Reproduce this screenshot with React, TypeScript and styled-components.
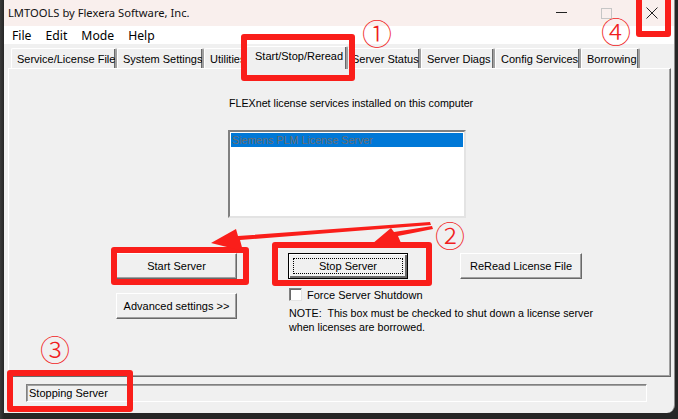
import React from "react";
import styled, { createGlobalStyle, css } from "styled-components";

const GlobalStyle = createGlobalStyle`
	html, body {
		margin: 0;
		padding: 0;
		background: #2b2b2b;
		width: 678px;
		height: 419px;
		overflow: hidden;
	}
`;

const Page = styled.div`
	width: 678px;
	height: 419px;
	padding-left: 4px;
	box-sizing: border-box;
	background: linear-gradient(90deg, #3a3a3a 0, #262626 4px);
`;

const Window = styled.div`
	position: relative;
	width: 671px;
	height: 413px;
	background: #f0f0f0;
	border-right: 1px solid #8c8c8c;
	border-bottom-right-radius: 8px;
	box-sizing: border-box;
	display: flex;
	flex-direction: column;
	font-family: "Liberation Sans", Arial, sans-serif;
	font-size: 10.7px;
	color: #000;
`;

const TitleBar = styled.div`
	height: 26px;
	background: #f9efed;
	display: flex;
	align-items: center;
	padding-left: 4px;
	font-family: "Noto Sans", sans-serif;
	font-size: 11.2px;
	color: #111;
`;

const TitleText = styled.span`
	flex: 1;
	padding-bottom: 1px;
`;

const CaptionButton = styled.div`
	width: 45px;
	height: 26px;
	display: flex;
	align-items: center;
	justify-content: center;
`;

const MenuBar = styled.div`
	height: 18px;
	background: #fff;
	display: flex;
	align-items: center;
	padding-left: 1px;
	font-family: "Noto Sans", sans-serif;
	font-size: 12.2px;
`;

const MenuItem = styled.span`
	padding: 0 7px;
`;

const Client = styled.div`
	flex: 1;
	display: flex;
	flex-direction: column;
`;

const TabStrip = styled.div`
	height: 24px;
	display: flex;
	align-items: flex-end;
	padding-left: 7px;
	position: relative;
	z-index: 1;
`;

const Tab = styled.div<{ $w: number; $active?: boolean }>`
	width: ${(p) => p.$w}px;
	height: 20px;
	box-sizing: border-box;
	border-top: 1px solid #fff;
	border-left: 1px solid #fff;
	border-right: 2px solid #a0a0a0;
	box-shadow: inset -1px 0 0 #696969;
	border-top-left-radius: 2px;
	border-top-right-radius: 2px;
	display: flex;
	align-items: center;
	padding-left: 5px;
	white-space: nowrap;
	overflow: hidden;
	background: #f0f0f0;
	font-size: 11px;
	${(p) =>
		p.$active &&
		css`
			height: 23px;
			margin: 0 -2px;
			padding-left: 8px;
			padding-bottom: 5px;
			margin-bottom: -1px;
			position: relative;
			z-index: 2;
		`}
`;

const Panel = styled.div`
	height: 309px;
	margin: 0 3px 0 4px;
	box-sizing: border-box;
	border-top: 1px solid #fff;
	border-left: 1px solid #fff;
	border-right: 1px solid #696969;
	border-bottom: 1px solid #696969;
	box-shadow: inset -1px -1px 0 #a0a0a0;
	display: flex;
	flex-direction: column;
	padding-top: 28px;
`;

const Caption = styled.div`
	margin-left: 220px;
	line-height: 13px;
`;

const ListBox = styled.div`
	margin: 20px 0 0 219px;
	width: 238px;
	height: 88px;
	box-sizing: border-box;
	background: #fff;
	border-top: 2px solid #808080;
	border-left: 2px solid #808080;
	border-right: 2px solid #e3e3e3;
	border-bottom: 2px solid #e3e3e3;
	padding: 1px 1px 0 1px;
`;

const ListItem = styled.div<{ $selected?: boolean }>`
	height: 14px;
	line-height: 14px;
	padding-left: 1px;
	background: ${(p) => (p.$selected ? "#0078d7" : "transparent")};
	color: ${(p) => (p.$selected ? "#6b6e6f" : "#000")};
`;

const Controls = styled.div`
	margin-top: 35px;
	display: flex;
	padding-left: 107px;
`;

const Column = styled.div`
	display: flex;
	flex-direction: column;
`;

const LeftColumn = styled(Column)`
	gap: 14px;
`;

const RightColumn = styled(Column)`
	margin-left: 51px;
`;

const ButtonRow = styled.div`
	display: flex;
	gap: 52px;
`;

const Button = styled.div<{ $w: number; $default?: boolean }>`
	width: ${(p) => p.$w}px;
	height: 26px;
	box-sizing: border-box;
	background: #f0f0f0;
	border-top: 1px solid #fff;
	border-left: 1px solid #fff;
	border-right: 1px solid #696969;
	border-bottom: 1px solid #696969;
	box-shadow: inset -1px -1px 0 #a0a0a0;
	display: flex;
	align-items: center;
	justify-content: center;
	font-size: 11px;
	${(p) =>
		p.$default &&
		css`
			border: 1px solid #000;
			box-shadow: inset 1px 1px 0 #fff, inset -2px -2px 0 #696969;
		`}
`;

const FocusRing = styled.div`
	position: absolute;
	inset: 4px;
	border: 1px dotted #000;
`;

const DefaultButton = styled(Button)`
	position: relative;
`;

const CheckRow = styled.div`
	margin: 9px 0 0 1px;
	display: flex;
	align-items: center;
	gap: 5px;
	height: 13px;
	font-size: 11px;
`;

const CheckBox = styled.div`
	width: 13px;
	height: 13px;
	box-sizing: border-box;
	background: #fff;
	border-top: 1px solid #808080;
	border-left: 1px solid #808080;
	border-right: 1px solid #e3e3e3;
	border-bottom: 1px solid #e3e3e3;
	box-shadow: inset 1px 1px 0 #696969;
`;

const Note = styled.div`
	margin: 5px 0 0 1px;
	line-height: 14px;
	white-space: pre;
`;

const StatusArea = styled.div`
	flex: 1;
	padding: 7px 27px 0 22px;
`;

const StatusField = styled.div`
	height: 18px;
	box-sizing: border-box;
	border-top: 1px solid #808080;
	border-left: 1px solid #808080;
	border-right: 1px solid #fff;
	border-bottom: 1px solid #fff;
	box-shadow: inset 1px 1px 0 #a0a0a0;
	display: flex;
	align-items: center;
	padding-left: 2px;
	font-size: 11px;
`;

/* annotation layer drawn over the screenshot */
const Marks = styled.div`
	position: absolute;
	inset: 0;
	pointer-events: none;
	z-index: 10;
`;

const RedBox = styled.div<{ $x: number; $y: number; $w: number; $h: number }>`
	position: absolute;
	left: ${(p) => p.$x - 4}px;
	top: ${(p) => p.$y}px;
	width: ${(p) => p.$w}px;
	height: ${(p) => p.$h}px;
	box-sizing: border-box;
	border: 6px solid #fa1e1a;
	border-radius: 3px;
`;

const Num = styled.span<{ $x: number; $y: number }>`
	position: absolute;
	left: ${(p) => p.$x - 4 - 16}px;
	top: ${(p) => p.$y - 18}px;
	width: 32px;
	height: 36px;
	line-height: 36px;
	text-align: center;
	font-family: "Noto Sans CJK SC", "DejaVu Sans", sans-serif;
	font-size: 30px;
	font-weight: 300;
	color: #f01e1e;
`;

const Arrows = styled.svg`
	position: absolute;
	left: -4px;
	top: 0;
`;

const tabs: [string, number][] = [
	["Service/License File", 106],
	["System Settings", 87],
	["Utilities", 44],
	["Start/Stop/Reread", 102],
	["Server Status", 75],
	["Server Diags", 74],
	["Config Services", 86],
	["Borrowing", 59],
];

export default function App() {
	return (
		<>
			<GlobalStyle />
			<Page>
				<Window>
					<TitleBar>
						<TitleText>LMTOOLS by Flexera Software, Inc.</TitleText>
						<CaptionButton>
							<svg width="11" height="2">
								<rect width="11" height="1" fill="#222" />
							</svg>
						</CaptionButton>
						<CaptionButton>
							<svg width="11" height="11">
								<rect x="0.5" y="0.5" width="10" height="10" fill="none" stroke="#c6c6c6" />
							</svg>
						</CaptionButton>
						<CaptionButton>
							<svg width="12" height="12">
								<path d="M0.5 0.5L11.5 11.5M11.5 0.5L0.5 11.5" stroke="#222" strokeWidth="1" />
							</svg>
						</CaptionButton>
					</TitleBar>
					<MenuBar>
						<MenuItem>File</MenuItem>
						<MenuItem>Edit</MenuItem>
						<MenuItem>Mode</MenuItem>
						<MenuItem>Help</MenuItem>
					</MenuBar>
					<Client>
						<TabStrip>
							{tabs.map(([label, w]) => (
								<Tab key={label} $w={w} $active={label === "Start/Stop/Reread"}>
									{label}
								</Tab>
							))}
						</TabStrip>
						<Panel>
							<Caption>FLEXnet license services installed on this computer</Caption>
							<ListBox>
								<ListItem $selected>Siemens PLM License Server</ListItem>
							</ListBox>
							<Controls>
								<LeftColumn>
									<Button $w={121}>Start Server</Button>
									<Button $w={121}>Advanced settings &gt;&gt;</Button>
								</LeftColumn>
								<RightColumn>
									<ButtonRow>
										<DefaultButton $w={120} $default>
											<FocusRing />
											Stop Server
										</DefaultButton>
										<Button $w={122}>ReRead License File</Button>
									</ButtonRow>
									<CheckRow>
										<CheckBox />
										Force Server Shutdown
									</CheckRow>
									<Note>
										{"NOTE:  This box must be checked to shut down a license server\nwhen licenses are borrowed."}
									</Note>
								</RightColumn>
							</Controls>
						</Panel>
						<StatusArea>
							<StatusField>Stopping Server</StatusField>
						</StatusArea>
					</Client>

					<Marks>
						<RedBox $x={241} $y={34} $w={114} $h={47} />
						<RedBox $x={636} $y={-6} $w={35} $h={43} />
						<RedBox $x={111} $y={247} $w={138} $h={38} />
						<RedBox $x={272} $y={242} $w={160} $h={44} />
						<RedBox $x={7} $y={370} $w={126} $h={42} />
						<Num $x={377} $y={32}>①</Num>
						<Num $x={450} $y={234}>②</Num>
						<Num $x={55} $y={348}>③</Num>
						<Num $x={616} $y={30}>④</Num>
						<Arrows width="678" height="419" viewBox="0 0 678 419">
							<polygon points="430,222 431,225 240,240 243,251 211,243 236,229 238,236" fill="#fa1e1a" />
							<polygon points="432,226 433,229 398,236 401,243 372,244 391,228 394,232" fill="#fa1e1a" />
						</Arrows>
					</Marks>
				</Window>
			</Page>
		</>
	);
}
